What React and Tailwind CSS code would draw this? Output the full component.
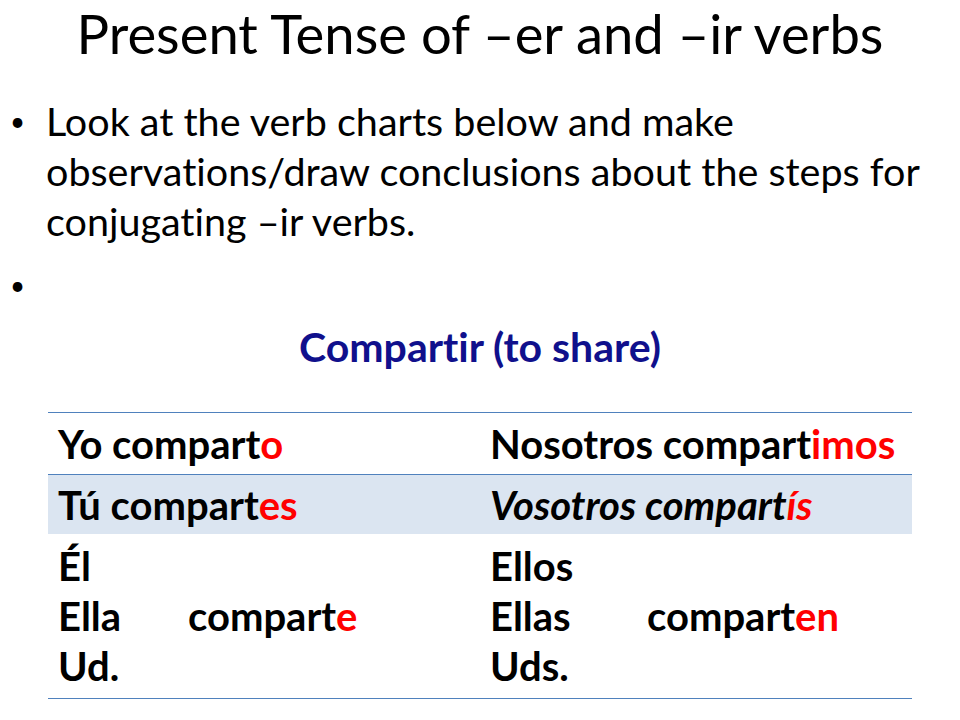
import React from 'react';

const Cell = ({ children, italic }) => (
  <div className={`pl-[10px] pr-3 text-[40px] font-bold leading-[50px] text-black ${italic ? 'italic' : ''}`}>
    {children}
  </div>
);

const Red = ({ children }) => <span className="text-[#ff0000]">{children}</span>;

const App = () => {
  return (
    <div className="w-[960px] h-[720px] bg-white overflow-hidden font-['Lato',sans-serif] [font-variant-ligatures:none]">
      <h1 className="h-[66px] pt-[2px] text-center text-[54.4px] leading-[62px] text-black">
        Present Tense of –er and –ir verbs
      </h1>

      <ul className="mt-[30px] pl-[10px] pr-[20px] text-[39.5px] text-black">
        <li className="flex leading-[50px]">
          <span className="w-[36px] shrink-0 text-[26px]">•</span>
          <span>
            Look at the verb charts below and make observations/draw conclusions about the steps for
            conjugating –ir verbs.
          </span>
        </li>
        <li className="flex mt-[14px] leading-[50px]">
          <span className="w-[36px] shrink-0 text-[26px]">•</span>
          <span />
        </li>
      </ul>

      <p className="mt-[12px] text-center text-[41px] leading-[50px] font-bold text-[#10108c]">
        Compartir (to share)
      </p>

      <div className="mx-[48px] mt-[40px] border-t border-b border-[#4f81bd]">
        <div className="grid grid-cols-2 h-[61px] items-center">
          <Cell>Yo compart<Red>o</Red></Cell>
          <Cell>Nosotros compart<Red>imos</Red></Cell>
        </div>
        <div className="grid grid-cols-2 h-[60px] items-center bg-[#dbe5f1] border-t border-[#4f81bd]">
          <Cell>Tú compart<Red>es</Red></Cell>
          <Cell italic>Vosotros compart<Red>ís</Red></Cell>
        </div>
        <div className="grid grid-cols-2 h-[164px] items-center">
          <div className="pl-[10px] pr-3 text-[40px] font-bold leading-[50px] text-black">
            <div>Él</div>
            <div className="flex"><span className="w-[130px]">Ella</span><span>compart<Red>e</Red></span></div>
            <div>Ud.</div>
          </div>
          <div className="pl-[10px] pr-3 text-[40px] font-bold leading-[50px] text-black">
            <div>Ellos</div>
            <div className="flex"><span className="w-[157px]">Ellas</span><span>compart<Red>en</Red></span></div>
            <div>Uds.</div>
          </div>
        </div>
      </div>
    </div>
  );
};

export default App;
